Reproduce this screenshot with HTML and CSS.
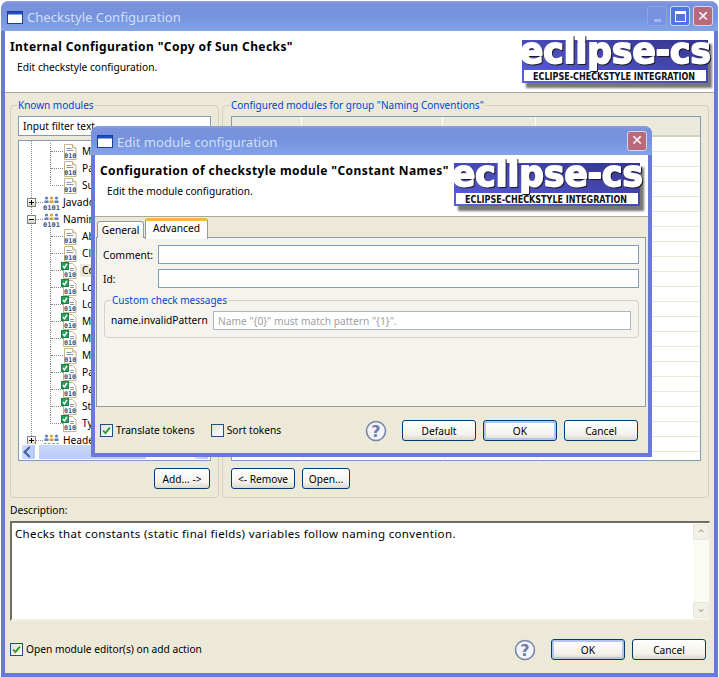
FILE: index.html
```html
<!DOCTYPE html>
<html lang="en">
<head>
    <meta charset="UTF-8">
    <title>Checkstyle Configuration</title>
    <link rel="stylesheet" href="styles.css">
</head>
<body>

    <svg class="defs" width="0" height="0">
        <defs>
            <linearGradient id="logoBlue" x1="0" y1="1" x2="1" y2="0">
                <stop offset="0" stop-color="#5c60e0"/>
                <stop offset="1" stop-color="#34348c"/>
            </linearGradient>
            <symbol id="leaf" viewBox="0 0 14 16">
                <path d="M1.500 .5h8l3.500 3.500v11.500h-11.500z" fill="#fff" stroke="#c2b48c"/>
                <path d="M9.500 .5v3.500h3.500" fill="#f3e6c0" stroke="#c2b48c"/>
                <path d="M3.500 4.500h5M3.500 6.500h7" stroke="#8a94b0"/>
                <text x="7.200" y="14.400" class="bits" textLength="12" lengthAdjust="spacingAndGlyphs">010</text>
            </symbol>
            <symbol id="leafon" viewBox="0 0 16 17">
                <path d="M2.500 1.500h9l3.500 3.500v11.500h-12.500z" fill="#fff" stroke="#c2b48c"/>
                <path d="M9 6.500h4M9 8.500h4" stroke="#8a94b0"/>
                <text x="9" y="15.400" class="bits" textLength="12" lengthAdjust="spacingAndGlyphs">010</text>
                <rect x=".5" y=".5" width="7" height="7" fill="#2aa05a" stroke="#1d8048"/>
                <path d="M2 4l1.500 1.800 2.500-4" fill="none" stroke="#fff" stroke-width="1.400"/>
            </symbol>
            <symbol id="group" viewBox="0 0 17 14">
                <circle cx="3.500" cy="2" r="1.600" fill="#5d7fc0"/>
                <circle cx="8.500" cy="2" r="1.600" fill="#d8a030"/>
                <circle cx="13.500" cy="2" r="1.600" fill="#5d7fc0"/>
                <path d="M1.500 7v-2.500h4v2.500z" fill="#5d7fc0"/>
                <path d="M6.500 7v-2.500h4v2.500z" fill="#d8a030"/>
                <path d="M11.500 7v-2.500h4v2.500z" fill="#5d7fc0"/>
                <text x="8.500" y="13.500" class="bits" textLength="17" lengthAdjust="spacingAndGlyphs">0101</text>
            </symbol>
            <symbol id="help" viewBox="0 0 22 22">
                <circle cx="11" cy="11" r="9.500" fill="#f4f4f8" stroke="#7686ac" stroke-width="1.600"/>
                <text x="11" y="17" class="help-mark">?</text>
            </symbol>
            <symbol id="winicon" viewBox="0 0 16 13">
                <rect x=".5" y=".5" width="15" height="12" fill="#fff" stroke="#1c3f94"/>
                <rect x="1" y="1" width="14" height="2.500" fill="#1c50c0"/>
            </symbol>
            <symbol id="tick" viewBox="0 0 13 13">
                <path d="M2.500 6.500l2.700 3 5.300-6.500" fill="none" stroke="#21a121" stroke-width="2.200"/>
            </symbol>
        </defs>
    </svg>

    <div class="window">
        <div class="titlebar">
            <svg class="win-icon"><use href="#winicon"/></svg>
            <span class="title-text">Checkstyle Configuration</span>
            <span class="winbtn winbtn-min"><i></i></span>
            <span class="winbtn winbtn-max"><i></i></span>
            <span class="winbtn winbtn-close">&#10005;</span>
        </div>

        <div class="banner">
            <div>
                <h1>Internal Configuration "Copy of Sun Checks"</h1>
                <p>Edit checkstyle configuration.</p>
            </div>
            <svg class="logo logo-main" viewBox="0 0 196 56">
                <rect x="8" y="11" width="186" height="44" fill="#777" class="logo-shadow"/>
                <rect x="4" y="7" width="186" height="43" fill="url(#logoBlue)"/>
                <rect x="6" y="37" width="182" height="11" fill="#fff"/>
                <text x="15" y="46.500" class="logo-sub" textLength="162" lengthAdjust="spacingAndGlyphs">ECLIPSE-CHECKSTYLE INTEGRATION</text>
                <text x="2" y="30" class="logo-name" textLength="191" lengthAdjust="spacingAndGlyphs">eclipse-cs</text>
            </svg>
        </div>

        <div class="panels">
            <fieldset class="group group-known">
                <legend>Known modules</legend>
                <input class="field" type="text" value="Input filter text">
                <div class="tree">
                    <div class="tree-list">
                        <ul class="leaves">
                            <li><i class="dash"></i><svg class="ico"><use href="#leaf"/></svg><span>Missing Switch Default</span></li>
                            <li><i class="dash"></i><svg class="ico"><use href="#leaf"/></svg><span>Parameter Assignment</span></li>
                            <li><i class="dash"></i><svg class="ico"><use href="#leaf"/></svg><span>Super Clone</span></li>
                        </ul>
                        <div class="cat"><b class="toggle plus"></b><i class="cat-dash"></i><svg class="cat-ico"><use href="#group"/></svg><span>Javadoc Comments</span></div>
                        <div class="cat"><b class="toggle"></b><i class="cat-dash"></i><svg class="cat-ico"><use href="#group"/></svg><span>Naming Conventions</span></div>
                        <ul class="leaves">
                            <li><i class="dash"></i><svg class="ico"><use href="#leaf"/></svg><span>Abstract Class Name</span></li>
                            <li><i class="dash"></i><svg class="ico"><use href="#leaf"/></svg><span>Class Type Parameter</span></li>
                            <li><i class="dash"></i><svg class="ico-on"><use href="#leafon"/></svg><span class="selected">Constant Names</span></li>
                            <li><i class="dash"></i><svg class="ico-on"><use href="#leafon"/></svg><span>Local Final Variable</span></li>
                            <li><i class="dash"></i><svg class="ico-on"><use href="#leafon"/></svg><span>Local Variable Names</span></li>
                            <li><i class="dash"></i><svg class="ico-on"><use href="#leafon"/></svg><span>Member Names</span></li>
                            <li><i class="dash"></i><svg class="ico-on"><use href="#leafon"/></svg><span>Method Names</span></li>
                            <li><i class="dash"></i><svg class="ico"><use href="#leaf"/></svg><span>Method Type Parameter</span></li>
                            <li><i class="dash"></i><svg class="ico-on"><use href="#leafon"/></svg><span>Package Names</span></li>
                            <li><i class="dash"></i><svg class="ico-on"><use href="#leafon"/></svg><span>Parameter Names</span></li>
                            <li><i class="dash"></i><svg class="ico-on"><use href="#leafon"/></svg><span>Static Variable Names</span></li>
                            <li><i class="dash"></i><svg class="ico-on"><use href="#leafon"/></svg><span>Type Names</span></li>
                        </ul>
                        <div class="cat"><b class="toggle plus"></b><i class="cat-dash"></i><svg class="cat-ico"><use href="#group"/></svg><span>Headers</span></div>
                    </div>
                    <div class="hscroll">
                        <span class="sb-btn sb-left"></span>
                        <span class="sb-thumb"></span>
                        <span class="sb-btn sb-right"></span>
                    </div>
                </div>
                <div class="group-actions group-actions-end">
                    <button class="btn btn-add">Add... -&gt;</button>
                </div>
            </fieldset>

            <fieldset class="group group-configured">
                <legend>Configured modules for group "Naming Conventions"</legend>
                <div class="table">
                    <div class="thead">
                        <span class="th th-1">Enabled</span>
                        <span class="th th-2">Module</span>
                        <span class="th th-3">Severity</span>
                        <span class="th th-4">Comment</span>
                    </div>
                    <div class="tbody"></div>
                </div>
                <div class="group-actions">
                    <button class="btn btn-remove">&lt;- Remove</button>
                    <button class="btn btn-open">Open...</button>
                </div>
            </fieldset>
        </div>

        <div class="description">
            <label class="desc-label">Description:</label>
            <div class="desc-box">
                <div class="desc-text">Checks that constants (static final fields) variables follow naming convention.</div>
                <div class="vscroll">
                    <span class="vs-btn">&#8963;</span>
                    <span class="vs-btn vs-down">&#8964;</span>
                </div>
            </div>
        </div>

        <div class="footer">
            <span class="check check-on"><svg><use href="#tick"/></svg></span>
            <span class="check-label">Open module editor(s) on add action</span>
            <svg class="help help-main"><use href="#help"/></svg>
            <button class="btn btn-dialog btn-default">OK</button>
            <button class="btn btn-dialog">Cancel</button>
        </div>
    </div>

    <div class="dialog">
        <div class="titlebar titlebar-dialog">
            <svg class="win-icon"><use href="#winicon"/></svg>
            <span class="title-text">Edit module configuration</span>
            <span class="winbtn winbtn-close">&#10005;</span>
        </div>

        <div class="banner banner-dialog">
            <div>
                <h1>Configuration of checkstyle module "Constant Names"</h1>
                <p>Edit the module configuration.</p>
            </div>
            <svg class="logo logo-dialog" viewBox="0 0 196 56">
                <rect x="8" y="11" width="186" height="44" fill="#777" class="logo-shadow"/>
                <rect x="4" y="7" width="186" height="43" fill="url(#logoBlue)"/>
                <rect x="6" y="37" width="182" height="11" fill="#fff"/>
                <text x="15" y="46.500" class="logo-sub" textLength="162" lengthAdjust="spacingAndGlyphs">ECLIPSE-CHECKSTYLE INTEGRATION</text>
                <text x="2" y="30" class="logo-name" textLength="191" lengthAdjust="spacingAndGlyphs">eclipse-cs</text>
            </svg>
        </div>

        <div class="tabs">
            <span class="tab">General</span>
            <span class="tab tab-active">Advanced</span>
        </div>
        <div class="pane">
            <div class="form-row">
                <label>Comment:</label>
                <input class="field" type="text">
            </div>
            <div class="form-row">
                <label>Id:</label>
                <input class="field" type="text">
            </div>
            <fieldset class="group group-messages">
                <legend>Custom check messages</legend>
                <div class="message-row">
                    <label>name.invalidPattern</label>
                    <input class="field field-msg" type="text" placeholder="Name &quot;{0}&quot; must match pattern &quot;{1}&quot;.">
                </div>
            </fieldset>
        </div>
        <div class="dialog-footer">
            <span class="check check-on"><svg><use href="#tick"/></svg></span>
            <span class="check-label">Translate tokens</span>
            <span class="check check-sort"></span>
            <span class="check-label">Sort tokens</span>
            <svg class="help help-dialog"><use href="#help"/></svg>
            <button class="btn btn-dialog">Default</button>
            <button class="btn btn-dialog btn-default">OK</button>
            <button class="btn btn-dialog">Cancel</button>
        </div>
    </div>

</body>
</html>
```

FILE: styles.css
```css
* {
    box-sizing: border-box;
}
html, body {
    height: 100%;
}
body {
    margin: 0;
    overflow: hidden;
    background: #fff;
    font-family: "Noto Sans", sans-serif;
    font-size: 10.200px;
    line-height: 13px;
    color: #000;
}
.defs {
    position: absolute;
}

/* windows */
.window, .dialog {
    position: absolute;
    display: flex;
    flex-direction: column;
    background: #ece9d8;
    border: solid #6a78d6;
    border-width: 0 4px 4px;
    border-radius: 8px 8px 0 0;
}
.window {
    left: 1px;
    top: 1px;
    width: 717px;
    height: 676px;
}
.dialog {
    left: 91px;
    top: 126px;
    width: 561px;
    height: 331px;
}
.titlebar {
    display: flex;
    align-items: center;
    flex: none;
    height: 30px;
    margin: 0 -4px;
    padding: 0 5px 0 6px;
    border-radius: 8px 8px 0 0;
    background: linear-gradient(#8d9fe2 0, #7b91dd 3px, #7593de 50%, #84a4e8 100%);
}
.titlebar-dialog {
    height: 29px;
}
.win-icon {
    width: 16px;
    height: 13px;
    margin-right: 4px;
    margin-top: 2px;
}
.title-text {
    flex: 1;
    font-size: 13.100px;
    color: #d3dff6;
    margin-top: 3px;
}
.winbtn {
    display: flex;
    align-items: center;
    justify-content: center;
    width: 20px;
    height: 20px;
    margin-left: 3px;
    border: 1px solid #d0d8f0;
    border-radius: 3px;
    color: #fff;
    font-size: 14px;
    font-weight: bold;
    font-family: "DejaVu Sans", sans-serif;
}
.winbtn-min {
    background: #7891e0;
    border-color: #8fa6e6;
}
.winbtn-min i {
    width: 7px;
    height: 3px;
    margin-top: 8px;
    background: #a3b6ec;
}
.winbtn-max {
    background: #4f76dc;
}
.winbtn-max i {
    width: 11px;
    height: 11px;
    border: 1px solid #fff;
    border-top-width: 3px;
}
.winbtn-close {
    background: #b8697c;
}

/* banner with logo */
.banner {
    display: flex;
    justify-content: space-between;
    flex: none;
    height: 62px;
    background: #fff;
    border-bottom: 1px solid #aca899;
    padding: 8px 0 0 5px;
}
.banner h1 {
    margin: 0;
    font-size: 12px;
    line-height: 16px;
    font-weight: bold;
    letter-spacing: .42px;
}
.banner p {
    margin: 6px 0 0 7px;
}
.logo {
    flex: none;
    width: 196px;
    height: 56px;
    margin-top: -6px;
    overflow: visible;
}
.logo-dialog {
    margin-top: -7px;
    margin-right: 2px;
}
.logo-shadow {
    filter: blur(1px);
}
.logo-name {
    font-family: "DejaVu Sans", sans-serif;
    font-size: 35px;
    font-weight: bold;
    fill: #fff;
    stroke: #fff;
    stroke-width: 1.800px;
    stroke-linejoin: round;
    filter: drop-shadow(1.500px 1.500px .5px #1c1c2c);
}
.logo-sub {
    font-family: "DejaVu Sans", sans-serif;
    font-size: 10px;
    font-weight: bold;
    fill: #111;
}

/* group boxes */
.panels {
    display: flex;
    flex: none;
    gap: 3px;
    padding: 6px 0 0 5px;
}
.group {
    margin: 0;
    padding: 5px 7px 0;
    border: 1px solid #d3d0bd;
    border-radius: 4px;
    min-width: 0;
}
.group legend {
    margin-left: -1px;
    padding: 0 1px;
    color: #0046d5;
    font-size: 10px;
    line-height: 12px;
}
.group-known {
    width: 209px;
    height: 399px;
}
.group-configured {
    width: 487px;
    height: 399px;
    padding-left: 8px;
}
.group-actions {
    display: flex;
    gap: 7px;
    margin-top: 7px;
}
.group-actions-end {
    justify-content: flex-end;
    padding-right: 1px;
}
.field {
    display: block;
    width: 100%;
    height: 20px;
    padding: 0 4px;
    border: 1px solid #7f9db9;
    background: #fff;
    font: 10.200px "Noto Sans", sans-serif;
    color: #000;
    outline: none;
}
.field::placeholder {
    color: #a0a0a0;
    opacity: 1;
}

/* tree */
.tree {
    display: flex;
    flex-direction: column;
    height: 321px;
    margin-top: 4px;
    border: 1px solid #7f9db9;
    background: #fff;
    overflow: hidden;
}
.tree-list {
    flex: 1;
    min-height: 0;
    margin-left: 12px;
    padding-top: 2px;
    border-left: 1px dotted #8a8a8a;
    white-space: nowrap;
}
.leaves {
    margin: 0 0 0 18px;
    padding: 0;
    list-style: none;
}
.leaves li {
    display: flex;
    align-items: center;
    height: 17px;
    border-left: 1px dotted #8a8a8a;
}
.leaves li:last-child {
    border-left-color: transparent;
}
.dash {
    flex: none;
    align-self: flex-start;
    width: 12px;
    height: 9px;
    border-bottom: 1px dotted #8a8a8a;
}
.leaves li:last-child .dash {
    border-left: 1px dotted #8a8a8a;
    margin-left: -1px;
    width: 13px;
}
.ico {
    flex: none;
    width: 14px;
    height: 16px;
}
.ico-on {
    flex: none;
    width: 16px;
    height: 17px;
    margin-left: -2px;
}
.leaves span {
    margin-left: 3px;
    padding: 0 2px;
}
.leaves .selected {
    background: #ece9d8;
}
.bits {
    font-family: "DejaVu Sans Mono", monospace;
    font-size: 6.500px;
    font-weight: bold;
    fill: #30507a;
    text-anchor: middle;
}
.cat {
    display: flex;
    align-items: center;
    height: 17px;
}
.toggle {
    position: relative;
    flex: none;
    width: 9px;
    height: 9px;
    margin-left: -5px;
    border: 1px solid #808080;
    background: linear-gradient(#fff, #d8d4c4);
}
.toggle::before {
    content: "";
    position: absolute;
    left: 1px;
    top: 3px;
    width: 5px;
    height: 1px;
    background: #000;
}
.plus::after {
    content: "";
    position: absolute;
    left: 3px;
    top: 1px;
    width: 1px;
    height: 5px;
    background: #000;
}
.cat-dash {
    flex: none;
    width: 7px;
    border-bottom: 1px dotted #8a8a8a;
}
.cat-ico {
    flex: none;
    width: 17px;
    height: 14px;
}
.cat span {
    margin-left: 3px;
}
.hscroll {
    position: relative;
    display: flex;
    flex: none;
    gap: 2px;
    height: 16px;
    padding: 0 1px 0 2px;
    background: #fbfbf6;
}
.sb-btn {
    flex: none;
    width: 15px;
    border: 1px solid #fff;
    border-radius: 2px;
    background: linear-gradient(90deg, #d0dcfb, #b4c8f6);
    position: relative;
}
.sb-left::before {
    content: "";
    position: absolute;
    left: 3px;
    top: 3px;
    width: 6px;
    height: 6px;
    border: solid #3d5d9c;
    border-width: 0 0 2px 2px;
    transform: rotate(45deg);
}
.sb-thumb {
    width: 109px;
    border: 1px solid #fff;
    border-radius: 2px;
    background: linear-gradient(#c9d8fa, #b8ccf8);
}
.sb-right {
    margin-left: auto;
}

/* table */
.table {
    display: flex;
    flex-direction: column;
    width: 470px;
    height: 345px;
    border: 1px solid #7f9db9;
    background: #fff;
}
.thead {
    display: flex;
    flex: none;
    height: 20px;
    background: #ebeadb;
    border-bottom: 2px solid #d6d2c2;
}
.th {
    padding: 7px 5px 0;
    border-right: 1px solid #fff;
    white-space: nowrap;
}
.th-1 {
    width: 70px;
    padding-left: 9px;
}
.th-2 {
    width: 141px;
    padding-left: 12px;
}
.th-3 {
    width: 93px;
}
.th-4 {
    flex: 1;
    border-right: 0;
}
.tbody {
    flex: 1;
    background:
        linear-gradient(#ebe8d8, #ebe8d8) 212px 0 / 1px 100% no-repeat,
        linear-gradient(#ebe8d8, #ebe8d8) 305px 0 / 1px 100% no-repeat,
        linear-gradient(#ebe8d8, #ebe8d8) 70px 0 / 1px 100% no-repeat,
        repeating-linear-gradient(#fff 0, #fff 14px, #ebe8d8 14px, #ebe8d8 15px);
}

/* description */
.description {
    flex: none;
    padding: 6px 4px 0 5px;
}
.desc-label {
    display: block;
    line-height: 13px;
}
.desc-box {
    display: flex;
    height: 100px;
    margin-top: 4px;
    border: solid;
    border-width: 2px 1px 2px 2px;
    border-color: #716f64 #f1efe2 #f1efe2 #716f64;
    background: #fff;
}
.desc-text {
    flex: 1;
    padding: 3px 3px;
    font-size: 11.500px;
    letter-spacing: .35px;
    line-height: 15px;
}
.vscroll {
    display: flex;
    flex-direction: column;
    justify-content: space-between;
    width: 16px;
    padding: 1px 0;
    background: #fbfbf6;
}
.vs-btn {
    height: 16px;
    border: 1px solid #e8e6d8;
    border-radius: 2px;
    background: #f2f1e8;
    color: #b8b8aa;
    font-family: "DejaVu Sans", sans-serif;
    font-size: 12px;
    font-weight: bold;
    line-height: 18px;
    text-align: center;
}
.vs-down {
    line-height: 10px;
}

/* footers and buttons */
.footer {
    display: flex;
    align-items: center;
    flex: none;
    margin-top: 18px;
    height: 21px;
    padding: 0 8px 0 5px;
}
.dialog-footer {
    display: flex;
    align-items: center;
    flex: 1;
    padding: 1px 10px 0 5px;
}
.check {
    flex: none;
    display: block;
    width: 13px;
    height: 13px;
    border: 1px solid #1c5180;
    background: linear-gradient(135deg, #e0e0d8, #fff);
}
.check svg {
    display: block;
    width: 11px;
    height: 11px;
}
.check-label {
    margin-left: 3px;
}
.check-sort {
    margin-left: 16px;
}
.help {
    flex: none;
    width: 22px;
    height: 22px;
    margin-left: auto;
    margin-right: 8px;
}
.help-mark {
    font-family: "DejaVu Sans", sans-serif;
    font-size: 16px;
    font-weight: bold;
    fill: #6d7da8;
    text-anchor: middle;
}
.btn {
    height: 21px;
    padding: 0;
    border: 1px solid #003c74;
    border-radius: 3px;
    background: linear-gradient(#fff, #f3f2ec 70%, #dcd8cb);
    font: 10.200px "Noto Sans", sans-serif;
    color: #000;
}
.btn-add {
    width: 56px;
}
.btn-remove {
    width: 64px;
}
.btn-open {
    width: 48px;
}
.btn-dialog {
    width: 74px;
    margin-left: 7px;
}
.btn-default {
    box-shadow: inset 0 0 0 2px #b3c5ee;
}

/* dialog body */
.tabs {
    display: flex;
    align-items: flex-end;
    flex: none;
    height: 21px;
    padding-left: 2px;
    margin-bottom: -1px;
    position: relative;
}
.tab {
    height: 17px;
    width: 47px;
    padding-top: 2px;
    text-align: center;
    border: 1px solid #919b9c;
    border-bottom: 0;
    border-radius: 3px 3px 0 0;
    background: linear-gradient(#fff, #f1efe4);
}
.tab-active {
    width: 63px;
    height: 21px;
    margin-left: 1px;
    margin-bottom: -1px;
    padding-top: 1px;
    background: #fcfcfa;
    border-top: 3px solid #f5b544;
    z-index: 1;
}
.pane {
    flex: none;
    height: 170px;
    margin: 0 2px 0 1px;
    padding: 7px 6px 0 6px;
    border: 1px solid #919b9c;
    background: #f4f3ee;
}
.form-row {
    display: flex;
    align-items: center;
    height: 19px;
    margin-bottom: 5px;
}
.form-row label {
    flex: none;
    width: 55px;
    padding-top: 1px;
}
.form-row .field {
    height: 19px;
}
.group-messages {
    margin: 6px 0 0 1px;
    height: 44px;
    padding: 5px 7px 0 6px;
    border-color: #d6d3c6;
}
.group-messages legend {
    margin-left: 0;
}
.message-row {
    display: flex;
    align-items: center;
}
.message-row label {
    flex: none;
    width: 102px;
}
.field-msg {
    height: 19px;
    border-color: #a9b8c8;
}
```
